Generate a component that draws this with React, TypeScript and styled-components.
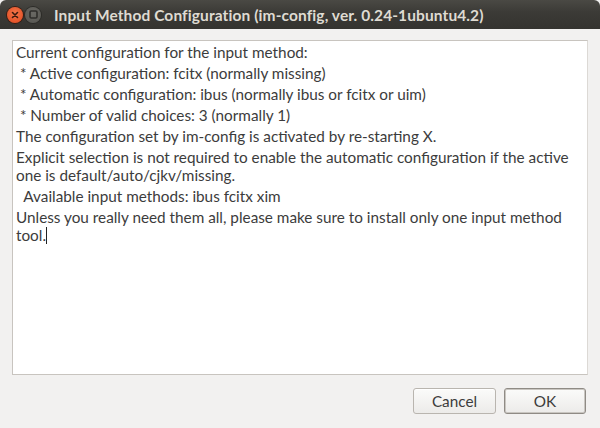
import styled, { createGlobalStyle } from "styled-components";

const GlobalStyle = createGlobalStyle`
  html, body {
    margin: 0;
    padding: 0;
    background: #f2f1f0;
  }
  * {
    box-sizing: border-box;
  }
`;

const Window = styled.div`
  width: 600px;
  height: 428px;
  display: flex;
  flex-direction: column;
  background: #f2f1f0;
  font-family: Lato, "Open Sans", sans-serif;
  overflow: hidden;
`;

const TitleBar = styled.div`
  height: 29px;
  flex-shrink: 0;
  display: flex;
  align-items: center;
  padding-left: 7px;
  gap: 2px;
  border-radius: 6px 6px 0 0;
  background: linear-gradient(#4a4944, #3c3b37 40%, #34332f);
`;

const WinButton = styled.div<{ $close?: boolean }>`
  width: 16px;
  height: 16px;
  border-radius: 50%;
  display: flex;
  align-items: center;
  justify-content: center;
  background: ${(p) =>
    p.$close
      ? "radial-gradient(circle at 50% 40%, #f4774a, #e0461c)"
      : "radial-gradient(circle at 50% 40%, #6a6964, #55544f)"};
  box-shadow: 0 0 0 1px ${(p) => (p.$close ? "#3a1d12" : "#2c2b28")};
`;

const Title = styled.div`
  margin-left: 11px;
  color: #dfdbd2;
  font-weight: 700;
  font-size: 15.5px;
  letter-spacing: 0.1px;
`;

const Body = styled.div`
  flex: 1;
  display: flex;
  flex-direction: column;
  padding: 11px 12px 14px 12px;
`;

const TextView = styled.div`
  height: 335px;
  background: #ffffff;
  border: 1px solid #c8c4bf;
  border-right-color: #dcd9d5;
  padding: 2px 3px;
  color: #3c3c3c;
  font-size: 15.3px;
  line-height: 18px;
`;

const Para = styled.div`
  white-space: nowrap;
  margin-bottom: 3px;
`;

const Caret = styled.span`
  display: inline-block;
  width: 1px;
  height: 17px;
  background: #222;
  vertical-align: -3px;
`;

const Actions = styled.div`
  display: flex;
  justify-content: flex-end;
  gap: 8px;
  margin-top: 13px;
  padding-right: 2px;
`;

const Button = styled.button<{ $default?: boolean }>`
  width: ${(p) => (p.$default ? "82px" : "83px")};
  height: 26px;
  border-radius: 3px;
  font-family: Lato, "Open Sans", sans-serif;
  font-size: 15.3px;
  color: #3c3c3c;
  background: linear-gradient(#fbfbfa, #ecebe9);
  border: 1px solid ${(p) => (p.$default ? "#8f8b85" : "#b9b5af")};
  box-shadow: ${(p) =>
    p.$default ? "inset 0 0 0 1px #c9c6c1" : "inset 0 1px 0 #ffffff"};
  padding: 0;
`;

function App() {
  return (
    <>
      <GlobalStyle />
      <Window>
        <TitleBar>
          <WinButton $close>
            <svg width="8" height="8" viewBox="0 0 8 8">
              <path
                d="M1.5 1.5 L6.5 6.5 M6.5 1.5 L1.5 6.5"
                stroke="#3b1a0e"
                strokeWidth="1.6"
                strokeLinecap="round"
              />
            </svg>
          </WinButton>
          <WinButton>
            <svg width="9" height="9" viewBox="0 0 9 9">
              <rect
                x="1"
                y="1"
                width="7"
                height="7"
                rx="1.2"
                fill="none"
                stroke="#2f2e2b"
                strokeWidth="1.6"
              />
            </svg>
          </WinButton>
          <Title>Input Method Configuration (im-config, ver. 0.24-1ubuntu4.2)</Title>
        </TitleBar>
        <Body>
          <TextView>
            <Para>Current configuration for the input method:</Para>
            <Para>&nbsp;* Active configuration: fcitx (normally missing)</Para>
            <Para>&nbsp;* Automatic configuration: ibus (normally ibus or fcitx or uim)</Para>
            <Para>&nbsp;* Number of valid choices: 3 (normally 1)</Para>
            <Para>The configuration set by im-config is activated by re-starting X.</Para>
            <Para>
              Explicit selection is not required to enable the automatic configuration if the active
              <br />
              one is default/auto/cjkv/missing.
            </Para>
            <Para>&nbsp; Available input methods: ibus fcitx xim</Para>
            <Para>
              Unless you really need them all, please make sure to install only one input method
              <br />
              tool.
              <Caret />
            </Para>
          </TextView>
          <Actions>
            <Button>Cancel</Button>
            <Button $default>OK</Button>
          </Actions>
        </Body>
      </Window>
    </>
  );
}

export default App;
